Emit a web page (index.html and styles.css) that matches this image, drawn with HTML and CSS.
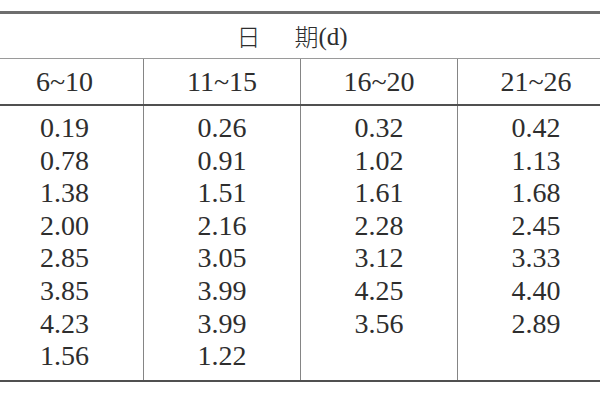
FILE: index.html
```html
<!DOCTYPE html>
<html lang="en">
<head>
<meta charset="utf-8">
<link rel="stylesheet" href="styles.css">
</head>
<body>
<div class="tbl">
  <div class="title"><span class="ri" lang="zh">日</span><span class="qi" lang="zh">期</span><span class="unit">(d)</span></div>
  <div class="row head">
    <div class="cell">6~10</div>
    <div class="cell">11~15</div>
    <div class="cell">16~20</div>
    <div class="cell">21~26</div>
  </div>
  <div class="row body">
    <div class="cell">0.19<br>0.78<br>1.38<br>2.00<br>2.85<br>3.85<br>4.23<br>1.56</div>
    <div class="cell">0.26<br>0.91<br>1.51<br>2.16<br>3.05<br>3.99<br>3.99<br>1.22</div>
    <div class="cell">0.32<br>1.02<br>1.61<br>2.28<br>3.12<br>4.25<br>3.56</div>
    <div class="cell">0.42<br>1.13<br>1.68<br>2.45<br>3.33<br>4.40<br>2.89</div>
  </div>
</div>
</body>
</html>
```

FILE: styles.css
```css
html, body {
  margin: 0;
  padding: 0;
  background: #ffffff;
  overflow: hidden;
}

body {
  width: 600px;
  height: 400px;
  font-family: "Liberation Serif", serif;
  color: #2e2e2e;
}

.tbl {
  width: 628px;
  margin-left: -14px;
  margin-top: 11px;
  border-top: 3px solid #6e6e6e;
  border-bottom: 2px solid #505050;
}

.title {
  height: 44px;
  display: flex;
  align-items: center;
  justify-content: center;
  padding-right: 16px;
  border-bottom: 1px solid #9a9a9a;
  font-size: 24px;
  line-height: 1;
}

.ri, .qi {
  font-family: "Noto Sans CJK SC", sans-serif;
  font-weight: 300;
}

.ri {
  margin-right: 34px;
}

.unit {
  font-family: "Liberation Serif", serif;
  font-size: 25px;
}

.row {
  display: grid;
  grid-template-columns: repeat(4, 157px);
}

.head {
  height: 45px;
  border-bottom: 2px solid #505050;
}

.head .cell {
  display: flex;
  align-items: center;
  justify-content: center;
  font-size: 28px;
  line-height: 31px;
}

.body {
  height: 274px;
}

.body .cell {
  padding-top: 6px;
  text-align: center;
  font-size: 28px;
  line-height: 32.6px;
}

.cell + .cell {
  border-left: 1px solid #858585;
}
```
